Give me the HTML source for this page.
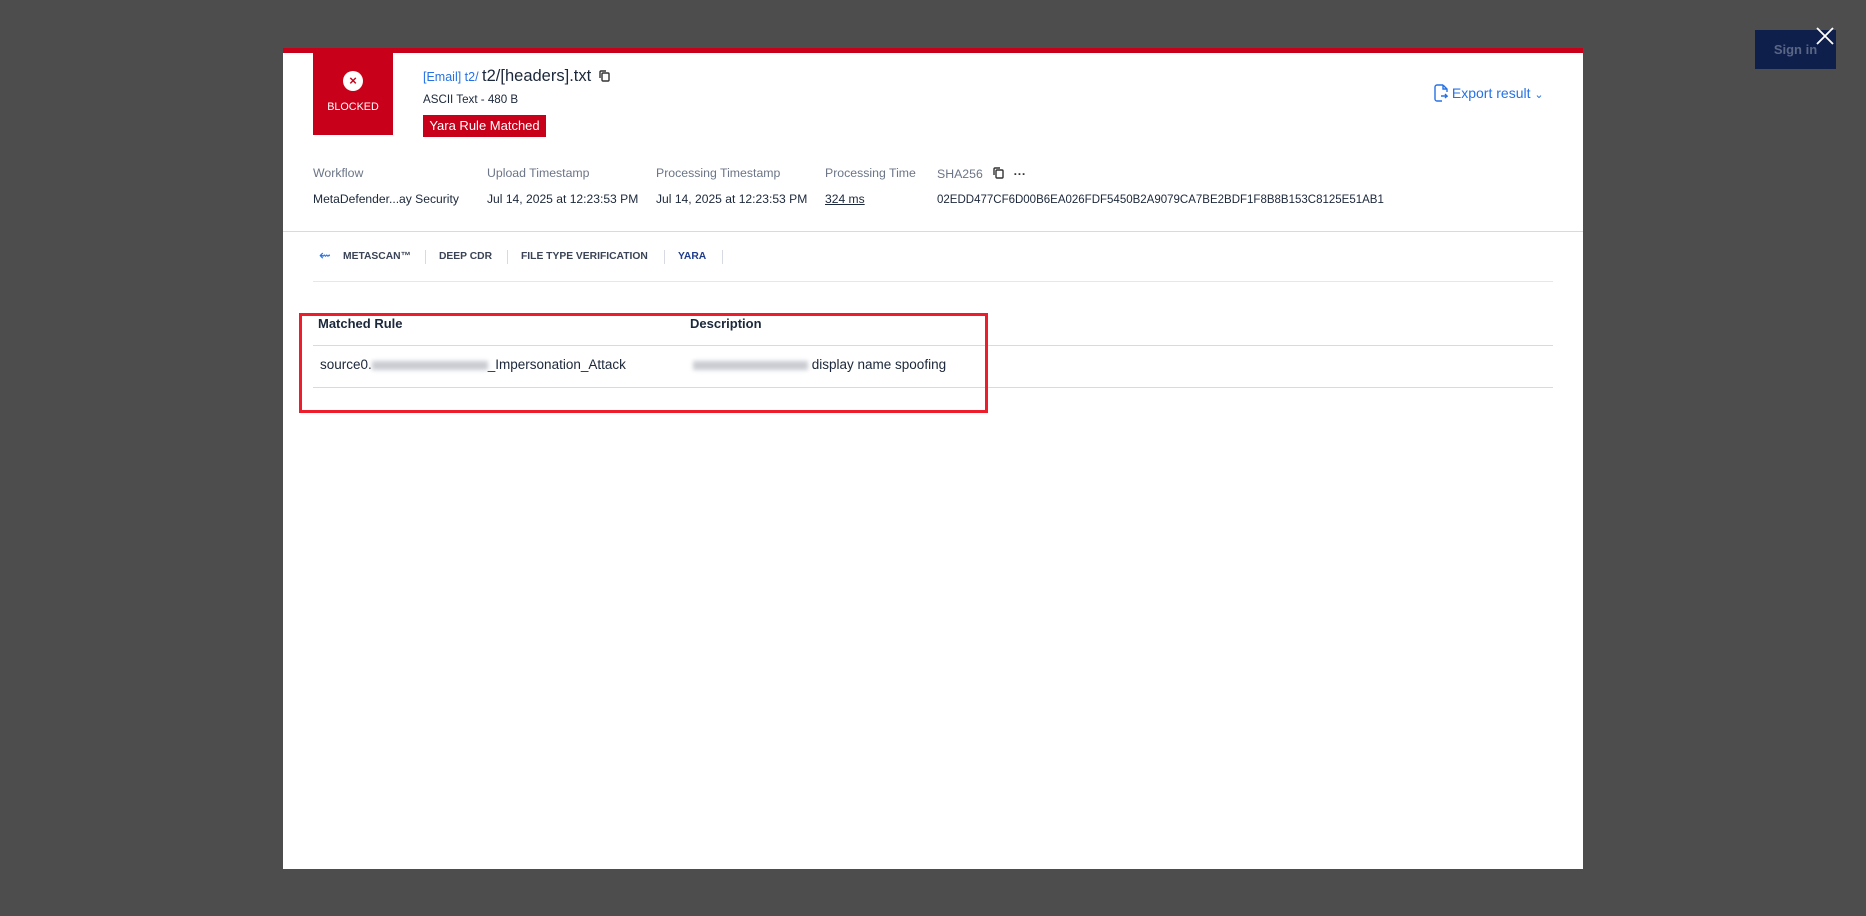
<!DOCTYPE html>
<html><head><meta charset="utf-8"><style>
*{margin:0;padding:0;box-sizing:border-box}
body{width:1866px;height:916px;background:#4d4d4d;position:relative;overflow:hidden;font-family:"Liberation Sans",sans-serif;color:#1b273a}
.a{position:absolute;white-space:nowrap}
#modal{position:absolute;left:283px;top:48px;width:1300px;height:821px;background:#fff;border-top:5px solid #c8001a}
.lbl{font-size:12.3px;color:#6b7587}
.val{font-size:12.1px;color:#1b273a}
.tab{font-size:10.3px;font-weight:bold;color:#3a4456}
.sep{width:1px;height:14px;background:#d6dae2}
.blur{display:inline-block;height:9px;background:#c9ccd2;filter:blur(2px);vertical-align:middle}
</style></head><body>
<div class="a" style="left:1755px;top:30px;width:81px;height:39px;background:#0e1f4b;color:#5a6685;font-size:13px;font-weight:bold;text-align:center;line-height:39px">Sign in</div>
<svg class="a" style="left:1816px;top:27px" width="18" height="18" viewBox="0 0 18 18"><path d="M1 1L17 17M17 1L1 17" stroke="#fff" stroke-width="1.8"/></svg>
<div id="modal">
 <div class="a" style="left:30px;top:0;width:80px;height:82px;background:#c8001a;color:#fff;text-align:center">
  <div style="margin:18px auto 0;width:20px;height:20px;border-radius:50%;background:#fff;color:#c8001a;font-size:13px;font-weight:bold;line-height:20px">×</div>
  <div style="font-size:10.8px;margin-top:10px">BLOCKED</div>
 </div>
 <div class="a" style="left:140px;top:14px;font-size:12.5px;color:#2672e5">[Email] t2/ <span style="font-size:16.5px;color:#1b273a">t2/[headers].txt</span>
  <svg width="14" height="14" viewBox="0 0 14 14" style="vertical-align:-2px;margin-left:3px"><rect x="4" y="4" width="7" height="8" rx="1" fill="none" stroke="#333" stroke-width="1.4"/><path d="M2 9V3a1 1 0 0 1 1-1h5" fill="none" stroke="#333" stroke-width="1.4"/></svg></div>
 <div class="a val" style="left:140px;top:40px;font-size:11.6px">ASCII Text - 480 B</div>
 <div class="a" style="left:140px;top:62px;width:123px;height:22px;background:#c8001a;color:#fff;font-size:13px;line-height:22px;text-align:center">Yara Rule Matched</div>
 <div class="a" style="left:1151px;top:31px;color:#2672e5;font-size:14px"><svg width="14" height="18" viewBox="0 0 14 18" style="vertical-align:-4px"><path d="M9 1H3a2 2 0 0 0-2 2v12a2 2 0 0 0 2 2h5M9 1l4 4v3M9 1v4h4M7 12h6l-2-2M13 12l-2 2" fill="none" stroke="#2672e5" stroke-width="1.4"/></svg> Export result <span style="font-size:11px">⌄</span></div>
 <div class="a lbl" style="left:30px;top:113px">Workflow</div>
 <div class="a lbl" style="left:204px;top:113px">Upload Timestamp</div>
 <div class="a lbl" style="left:373px;top:113px">Processing Timestamp</div>
 <div class="a lbl" style="left:542px;top:113px">Processing Time</div>
 <div class="a lbl" style="left:654px;top:113px">SHA256 <svg width="14" height="14" viewBox="0 0 14 14" style="vertical-align:-2px;margin-left:6px"><rect x="4" y="4" width="7" height="8" rx="1" fill="none" stroke="#333" stroke-width="1.4"/><path d="M2 9V3a1 1 0 0 1 1-1h5" fill="none" stroke="#333" stroke-width="1.4"/></svg> <b style="color:#333;margin-left:4px">···</b></div>
 <div class="a val" style="left:30px;top:139px">MetaDefender...ay Security</div>
 <div class="a val" style="left:204px;top:139px">Jul 14, 2025 at 12:23:53 PM</div>
 <div class="a val" style="left:373px;top:139px">Jul 14, 2025 at 12:23:53 PM</div>
 <div class="a val" style="left:542px;top:139px;text-decoration:underline">324 ms</div>
 <div class="a val" style="left:654px;top:141px;font-size:11.5px">02EDD477CF6D00B6EA026FDF5450B2A9079CA7BE2BDF1F8B8B153C8125E51AB1</div>
 <div class="a" style="left:0;top:178px;width:1300px;height:1px;background:#d6dae2"></div>
 <div class="a" style="left:36px;top:194px;color:#2672e5;font-size:14px">⇜</div>
 <div class="a tab" style="left:60px;top:198px">METASCAN™</div>
 <div class="a sep" style="left:142px;top:197px"></div>
 <div class="a tab" style="left:156px;top:198px">DEEP CDR</div>
 <div class="a sep" style="left:224px;top:197px"></div>
 <div class="a tab" style="left:238px;top:198px">FILE TYPE VERIFICATION</div>
 <div class="a sep" style="left:381px;top:197px"></div>
 <div class="a tab" style="left:395px;top:198px;color:#1f3d8c">YARA</div>
 <div class="a sep" style="left:439px;top:197px"></div>
 <div class="a" style="left:30px;top:228px;width:1240px;height:1px;background:#e4e7ec"></div>
 <div class="a" style="left:30px;top:292px;width:1240px;height:1px;background:#d6dae2"></div>
 <div class="a" style="left:30px;top:334px;width:1240px;height:1px;background:#d6dae2"></div>
 <div class="a" style="left:35px;top:263px;font-size:13px;font-weight:bold">Matched Rule</div>
 <div class="a" style="left:407px;top:263px;font-size:13px;font-weight:bold">Description</div>
 <div class="a val" style="left:37px;top:304px;font-size:13.5px">source0.<span class="blur" style="width:116px"></span>_Impersonation_Attack</div>
 <div class="a val" style="left:410px;top:304px;font-size:13.5px"><span class="blur" style="width:115px"></span> display name spoofing</div>
 <div class="a" style="left:16px;top:260px;width:689px;height:100px;border:3px solid #ee1d2b"></div>
</div>
</body></html>
